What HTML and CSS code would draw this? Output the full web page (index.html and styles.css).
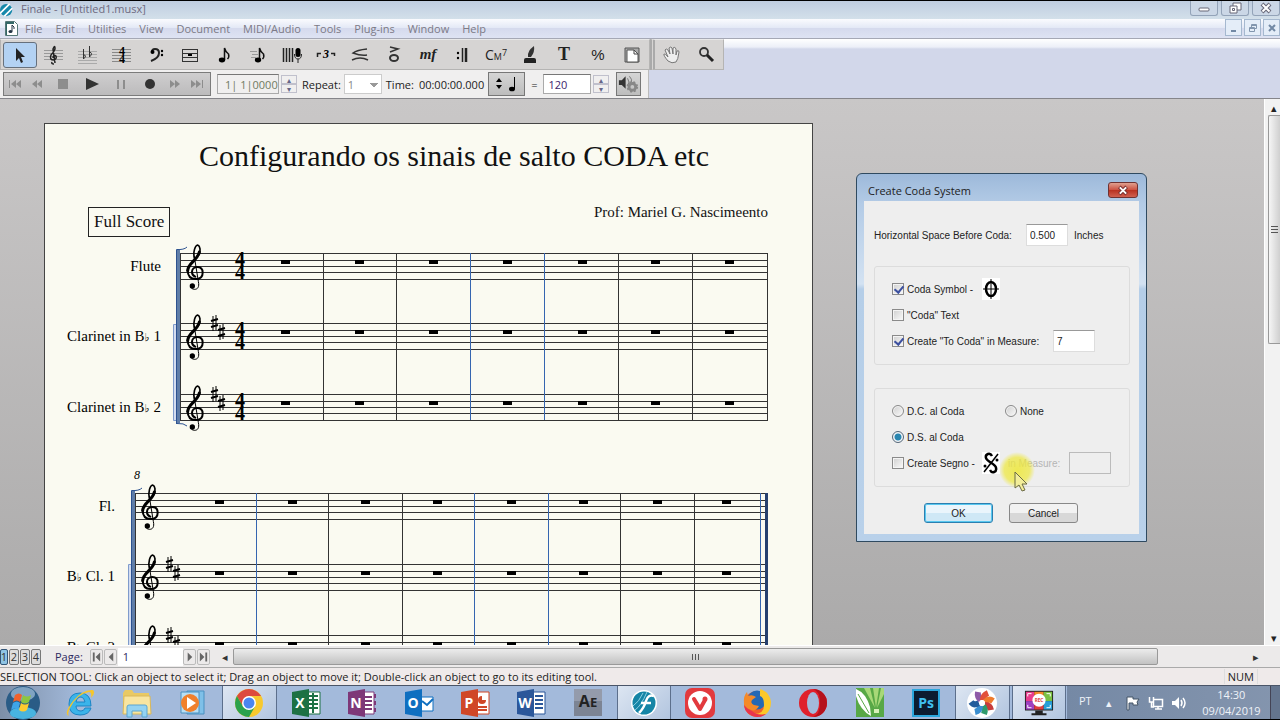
FILE: index.html
```html
<!DOCTYPE html>
<html lang="en">
<head>
  <meta charset="UTF-8">
  <meta name="viewport" content="width=device-width, initial-scale=1.0">
  <title>Finale - [Untitled1.musx]</title>
  <link rel="stylesheet" href="styles.css">
</head>
<body>
  <!-- Shared music symbols -->
  <svg class="defs" width="0" height="0" aria-hidden="true">
    <defs>
      <g id="clef" transform="scale(.3333)" fill="none" stroke="#000" stroke-linecap="round">
        <path stroke-width="5" d="M25 42C21 24 27 4 35 3C43 6 44 20 39 32"/>
        <path stroke-width="9" d="M40 24C36 48 6 56 5 80"/>
        <path stroke-width="6" d="M5 78C5 98 16 105 29 105C44 105 50 96 50 86C50 75 43 69 34 69C24 69 18 76 18 84C18 91 22 96 28 98"/>
        <path stroke-width="3" d="M25 38L37 112C41 130 34 136 26 136C18 136 12 130 14 124"/>
        <circle cx="19" cy="126" r="8" fill="#000" stroke="none"/>
      </g>
      <g id="sharp" stroke="#000" fill="none">
        <path d="M2 1V16M5 0V15"/>
        <path stroke-width="2" d="M0 6L7 4M0 12L7 10"/>
      </g>
      <g id="time" font-family="Liberation Serif, serif" font-weight="bold" font-size="20" text-anchor="middle">
        <text x="0" y="13">4</text>
        <text x="0" y="26">4</text>
      </g>
      <g id="rests1">
        <path d="M281 7h9v4h-9zM355 7h9v4h-9zM429 7h9v4h-9zM503 7h9v4h-9zM578 7h9v4h-9zM651 7h9v4h-9zM725 7h9v4h-9z"/>
      </g>
      <g id="rests2">
        <path d="M215 7h9v4h-9zM288 7h9v4h-9zM361 7h9v4h-9zM433 7h9v4h-9zM507 7h9v4h-9zM579 7h9v4h-9zM653 7h9v4h-9zM722 7h9v4h-9z"/>
      </g>
      <path id="staff1" d="M180 .5H768M180 7.5H768M180 13.5H768M180 19.5H768M180 26.5H768"/>
      <path id="staff2" d="M135 .5H768M135 7.5H768M135 13.5H768M135 19.5H768M135 26.5H768"/>
    </defs>
  </svg>

  <!-- Title bar -->
  <header class="titlebar">
    <svg class="app-icon" viewBox="0 0 16 16"><circle cx="7" cy="8" r="7" fill="#1688ab"/><path d="M0 12L11 1M5 15L14 6" stroke="#fff" stroke-width="2"/></svg>
    <span class="title">Finale - [Untitled1.musx]</span>
    <div class="window-buttons">
      <button aria-label="Minimize"><svg viewBox="0 0 14 12"><rect x="2" y="6" width="10" height="3" rx="1" fill="#fff" stroke="#667"/></svg></button>
      <button aria-label="Restore"><svg viewBox="0 0 14 12"><path d="M5 1h8v7h-8z" fill="#fff" stroke="#667"/><path d="M2 4h7v7h-7z" fill="#fff" stroke="#667"/><path d="M4.500 6.500h2v2h-2z" fill="none" stroke="#667"/></svg></button>
      <button aria-label="Close"><svg viewBox="0 0 14 12"><path d="M3 2l8 8M11 2l-8 8" stroke="#667" stroke-width="4"/><path d="M3.500 2.500l7 7M10.500 2.500l-7 7" stroke="#fff" stroke-width="2"/></svg></button>
    </div>
  </header>

  <!-- Menu bar -->
  <nav class="menubar">
    <svg class="doc-icon" viewBox="0 0 13 15"><path d="M.5.5h9l3 3v11h-12z" fill="#fff" stroke="#577"/><path d="M1 1h8v2H2v11H1z" fill="#366"/><path d="M7 4v6M7 4q3 2 2 4" fill="none" stroke="#234"/><ellipse cx="5.500" cy="10.500" rx="2" ry="1.500" fill="#234"/></svg>
    <a href="#">File</a>
    <a href="#">Edit</a>
    <a href="#">Utilities</a>
    <a href="#">View</a>
    <a href="#">Document</a>
    <a href="#">MIDI/Audio</a>
    <a href="#">Tools</a>
    <a href="#">Plug-ins</a>
    <a href="#">Window</a>
    <a href="#">Help</a>
    <div class="mdi-buttons">
      <button aria-label="Minimize document"><svg viewBox="0 0 10 10"><path d="M2 8h5" stroke="#7289a5" stroke-width="2"/></svg></button>
      <button aria-label="Restore document"><svg viewBox="0 0 10 10" fill="none" stroke="#8296ae"><path d="M3.500 4V1.500h5v4H7M1.500 4.500h5v4h-5zM1 5.500h5M3 2.500h5"/></svg></button>
      <button aria-label="Close document"><svg viewBox="0 0 10 10"><path d="M2 2l6 6M8 2L2 8" stroke="#7289a5" stroke-width="2"/></svg></button>
    </div>
  </nav>

  <!-- Tool palettes -->
  <div class="toolbars">
    <div class="tool-row">
      <div class="palette main-tools">
        <button class="selected" aria-label="Selection Tool"><svg viewBox="0 0 24 24"><path d="M8 5v13l3-3 2 5 2-1-2-5h4z" fill="#222"/></svg></button>
        <button aria-label="Staff Tool"><svg viewBox="0 0 24 24"><path d="M2 7.500h19M2 10.500h19M2 13.500h19M2 16.500h19" stroke="#999"/><path d="M12 21q-3 0-2-2m3 1L11 6q2-5 2 0-1 3-4 6-2 5 3 5 3-1 2-4-3-2-3 2" fill="none" stroke="#222" stroke-width="1.500"/></svg></button>
        <button aria-label="Key Signature Tool"><svg viewBox="0 0 24 24"><path d="M2 8.500h19M2 11.500h19M2 14.500h19M2 17.500h19M2 20.500h19" stroke="#aaa"/><path d="M7.500 6v10q4-4 0-4M13.500 3v11q4-4 0-5" fill="none" stroke="#333"/></svg></button>
        <button aria-label="Time Signature Tool"><svg viewBox="0 0 24 24"><path d="M2 6.500h19M2 9.500h19M2 12.500h19M2 15.500h19M2 18.500h19" stroke="#888"/><text x="12" y="12" class="meter">4</text><text x="12" y="20" class="meter">4</text></svg></button>
        <button aria-label="Clef Tool"><svg viewBox="0 0 24 24"><path d="M8 9q0-3 3-3 4 0 4 4 0 5-8 8" fill="none" stroke="#222" stroke-width="2"/><circle cx="8.500" cy="9" r="2"/><circle cx="18" cy="8" r="1.200"/><circle cx="18" cy="12" r="1.200"/></svg></button>
        <button aria-label="Measure Tool"><svg viewBox="0 0 24 24"><path d="M4.500 6v13M19.500 6v13M4 6.500h16M4 10.500h16M4 14.500h16M4 18.500h16" fill="none" stroke="#333"/><path d="M10 11h4v2h-4z"/></svg></button>
        <button aria-label="Simple Entry Tool"><svg viewBox="0 0 24 24"><path d="M12.500 17V5q1 4 4 6 1 3-1 5" fill="none" stroke="#111" stroke-width="1.500"/><ellipse cx="10" cy="17" rx="3.200" ry="2.400"/></svg></button>
        <button aria-label="Speedy Entry Tool"><svg viewBox="0 0 24 24"><path d="M13.500 17V5q1 4 4 6 1 3-1 5" fill="none" stroke="#111" stroke-width="1.500"/><ellipse cx="12" cy="17" rx="3.200" ry="2.400"/><path d="M4 8.500h7M6 11.500h6M5 14.500h5" stroke="#999"/></svg></button>
        <button aria-label="HyperScribe Tool"><svg viewBox="0 0 24 24"><path d="M3.500 5v14M6.500 5v14M9.500 5v14M12.500 5v14" stroke="#222" stroke-width="1.500"/><rect x="15.500" y="5" width="5" height="9" rx="2.500"/><path d="M14.500 11q0 5 3.500 5t3.500-5M18 16v4" fill="none" stroke="#222"/></svg></button>
        <button aria-label="Tuplet Tool"><svg viewBox="0 0 24 24"><path d="M3.500 14v-3.500H7M17 10.500h3.500V13" fill="none" stroke="#222" stroke-width="1.500"/><text x="12" y="15" class="tuplet">3</text></svg></button>
        <button aria-label="Smart Shape Tool"><svg viewBox="0 0 24 24" fill="none" stroke="#333" stroke-width="1.500"><path d="M19 6Q9 7 5 10q8 3 14 2"/><path d="M4 17q8-4 16 0"/></svg></button>
        <button aria-label="Articulation Tool"><svg viewBox="0 0 24 24"><path d="M8 4l8 2-8 3" fill="none" stroke="#333" stroke-width="1.500"/><ellipse cx="12" cy="15" rx="4" ry="3" fill="none" stroke="#333" stroke-width="2"/></svg></button>
        <button class="dynamic" aria-label="Expression Tool">mf</button>
        <button aria-label="Repeat Tool"><svg viewBox="0 0 24 24"><path d="M12.500 5v14" stroke="#222" stroke-width="1.500"/><path d="M16 5v14" stroke="#222" stroke-width="2.500"/><circle cx="8" cy="10" r="1.200"/><circle cx="8" cy="15" r="1.200"/></svg></button>
        <button class="chord" aria-label="Chord Tool">C<small>M</small><sup>7</sup></button>
        <button aria-label="Lyrics Tool"><svg viewBox="0 0 24 24"><path d="M6 20v-3q0-2 2-2h8q2 0 2 2v3z" fill="#222"/><path d="M10 14Q9 8 16 3q1 6-3 11z" fill="#333"/></svg></button>
        <button class="text-tool" aria-label="Text Tool">T</button>
        <button class="percent" aria-label="Resize Tool">%</button>
        <button aria-label="Page Layout Tool"><svg viewBox="0 0 24 24"><path d="M5 5h14v14H5z" fill="#aaa" stroke="#555"/><path d="M7 7h7l4 4v8H7z" fill="#fff" stroke="#555"/><path d="M14 7v4h4" fill="none" stroke="#444"/></svg></button>
      </div>
      <div class="palette nav-tools">
        <button aria-label="Hand Grabber Tool"><svg viewBox="0 0 24 24"><path d="M8 18q-5-6-4-7t4 3L5 7q1-2 3 0l2 4-1-6q2-2 3 0l1 6V5q2-2 3 1v6l1-4q2-1 2 1-1 8-3 10-4 2-8-1z" fill="#eee" stroke="#777"/></svg></button>
        <button aria-label="Zoom Tool"><svg viewBox="0 0 24 24"><circle cx="10" cy="9" r="4" fill="none" stroke="#333" stroke-width="1.800"/><path d="M13 12l6 6" stroke="#222" stroke-width="3"/></svg></button>
      </div>
    </div>

    <div class="playback">
      <div class="transport">
        <button aria-label="Rewind to start"><svg viewBox="0 0 16 16"><path d="M2 4h1v8H2zM9 4v8L4 8zM14 4v8L9 8z"/></svg></button>
        <button aria-label="Rewind"><svg viewBox="0 0 16 16"><path d="M8 4v8L3 8zM13 4v8L8 8z"/></svg></button>
        <button class="wide" aria-label="Stop"><svg viewBox="0 0 16 16"><path d="M3 3h10v10H3z"/></svg></button>
        <button class="wide dark" aria-label="Play"><svg viewBox="0 0 16 16"><path d="M2 2v12l13-6z"/></svg></button>
        <button class="wide" aria-label="Pause"><svg viewBox="0 0 16 16"><path d="M4 4h2v9H4zM10 4h2v9h-2z"/></svg></button>
        <button class="wide dark" aria-label="Record"><svg viewBox="0 0 16 16"><circle cx="8" cy="8" r="5"/></svg></button>
        <button aria-label="Fast forward"><svg viewBox="0 0 16 16"><path d="M3 4v8l5-4zM8 4v8l5-4z"/></svg></button>
        <button aria-label="Forward to end"><svg viewBox="0 0 16 16"><path d="M2 4v8l5-4zM7 4v8l5-4zM13 4h1v8h-1z"/></svg></button>
      </div>
      <div class="stepper">
        <input class="counter" type="text" value="1| 1|0000" aria-label="Counter">
        <span class="spin"><button aria-label="Counter up">▴</button><button aria-label="Counter down">▾</button></span>
      </div>
      <label for="repeat">Repeat:</label>
      <select id="repeat" class="repeat"><option>1</option></select>
      <span>Time:</span>
      <span class="time">00:00:00.000</span>
      <button class="note-button" aria-label="Beat unit"><svg viewBox="0 0 30 20"><path d="M4 8l3-4 3 4zM4 11l3 4 3-4zM22 3h1v12h-1z"/><ellipse cx="20" cy="15" rx="3" ry="2.300"/></svg></button>
      <label for="tempo" class="equals">=</label>
      <div class="stepper">
        <input id="tempo" class="tempo" type="text" value="120">
        <span class="spin"><button aria-label="Tempo up">▴</button><button aria-label="Tempo down">▾</button></span>
      </div>
      <button class="speaker" aria-label="Playback settings"><svg viewBox="0 0 24 22"><path d="M2 7h3l4-4v13l-4-4H2z" fill="#333"/><path d="M11 5q3 4 0 8M13 3q3 3 2 6" fill="none" stroke="#777"/><circle cx="16" cy="14" r="3.500" fill="none" stroke="#888" stroke-width="3"/><circle cx="16" cy="14" r="5" fill="none" stroke="#888" stroke-width="2" stroke-dasharray="2 2"/></svg></button>
    </div>
  </div>

  <!-- Score -->
  <main class="workspace">
    <div class="canvas">
      <article class="sheet">
        <h1>Configurando os sinais de salto CODA etc</h1>
        <div class="credits">
          <span class="part-name">Full Score</span>
          <span class="composer">Prof: Mariel G. Nascimeento</span>
        </div>
        <svg class="system" viewBox="45 237 767 200">
          <g class="names" text-anchor="end">
            <text x="161" y="271">Flute</text>
            <text x="161" y="341">Clarinet in B<tspan class="flat">♭</tspan> 1</text>
            <text x="161" y="412">Clarinet in B<tspan class="flat">♭</tspan> 2</text>
          </g>
          <path d="M173.500 324.500h4v96h-4z" fill="#d3dcf0" stroke="#7f9bcc"/>
          <path d="M177 250h3v173h-3z" fill="#5f7da8"/>
          <path d="M176.500 424V249.500Q184 250 187 247M177 423.500Q184 423 187 426" fill="none" stroke="#2c5290"/>
          <g class="lines">
            <use href="#staff1" y="253"/><use href="#staff1" y="323"/><use href="#staff1" y="394"/>
            <path d="M180.500 253V420M323.500 253V420M396.500 253V420M618.500 253V420M692.500 253V420M767.500 253V420"/>
            <path class="blue" d="M470.500 253V420M544.500 253V420"/>
          </g>
          <use href="#rests1" y="253"/><use href="#rests1" y="323"/><use href="#rests1" y="394"/>
          <use href="#clef" transform="translate(186 244)"/><use href="#clef" transform="translate(186 314)"/><use href="#clef" transform="translate(186 385)"/>
          <use href="#time" x="240" y="253"/><use href="#time" x="240" y="323"/><use href="#time" x="240" y="394"/>
          <use href="#sharp" x="211" y="315"/><use href="#sharp" x="218" y="324"/>
          <use href="#sharp" x="211" y="386"/><use href="#sharp" x="218" y="395"/>
        </svg>
        <svg class="system" viewBox="45 437 767 240">
          <g class="names" text-anchor="end">
            <text x="140" y="479" class="measure-number">8</text>
            <text x="115" y="511">Fl.</text>
            <text x="115" y="581">B<tspan class="flat">♭</tspan> Cl. 1</text>
            <text x="115" y="652">B<tspan class="flat">♭</tspan> Cl. 2</text>
          </g>
          <path d="M128.500 564.500h4v96h-4z" fill="#d3dcf0" stroke="#7f9bcc"/>
          <path d="M132 490h3v173h-3z" fill="#5f7da8"/>
          <path d="M131.500 664V490.500Q139 491 142 488" fill="none" stroke="#2c5290"/>
          <g class="lines">
            <use href="#staff2" y="493"/><use href="#staff2" y="564"/><use href="#staff2" y="635"/>
            <path d="M135.500 493V662M328.500 493V662M402.500 493V662M620.500 493V662M694.500 493V662"/>
            <path class="blue" d="M256.500 493V662M474.500 493V662M548.500 493V662M760.500 493V662"/>
          </g>
          <path d="M765 493h3v169h-3z" fill="#26406f"/>
          <use href="#rests2" y="493"/><use href="#rests2" y="564"/><use href="#rests2" y="635"/>
          <use href="#clef" transform="translate(141 484)"/><use href="#clef" transform="translate(141 554)"/><use href="#clef" transform="translate(141 625)"/>
          <use href="#sharp" x="166" y="556"/><use href="#sharp" x="173" y="565"/>
          <use href="#sharp" x="166" y="627"/><use href="#sharp" x="173" y="636"/>
        </svg>
      </article>
    </div>
    <div class="vscroll">
      <button aria-label="Scroll up">▴</button>
      <div class="vthumb"><i></i><i></i><i></i></div>
      <button class="last" aria-label="Scroll down">▾</button>
    </div>
  </main>

  <!-- Page navigation -->
  <div class="pagebar">
    <div class="layers">
      <button class="on">1</button><button>2</button><button>3</button><button>4</button>
    </div>
    <label for="page">Page:</label>
    <button class="nav" aria-label="First page"><svg viewBox="0 0 12 14"><path d="M2 2h2v10H2zM10 2v10L5 7z"/></svg></button>
    <button class="nav" aria-label="Previous page"><svg viewBox="0 0 12 14"><path d="M9 2v10L4 7z"/></svg></button>
    <input id="page" type="text" value="1">
    <button class="nav" aria-label="Next page"><svg viewBox="0 0 12 14"><path d="M4 2v10l5-5z"/></svg></button>
    <button class="nav" aria-label="Last page"><svg viewBox="0 0 12 14"><path d="M2 2v10l5-5zM8 2h2v10H8z"/></svg></button>
    <div class="hscroll">
      <button aria-label="Scroll left">◂</button>
      <div class="hthumb"><i></i><i></i><i></i></div>
      <button class="last" aria-label="Scroll right">▸</button>
    </div>
  </div>

  <footer class="statusbar">
    <span>SELECTION TOOL: Click an object to select it; Drag an object to move it; Double-click an object to go to its editing tool.</span>
    <span class="num">NUM</span>
  </footer>

  <!-- Windows taskbar -->
  <div class="taskbar">
    <button class="start" aria-label="Start"><svg viewBox="0 0 36 34"><circle cx="18" cy="17" r="17" fill="#2a5c86"/><ellipse cx="18" cy="27" rx="13" ry="6" fill="#48b4e0"/><ellipse cx="18" cy="8" rx="12" ry="7" fill="#7fa3c2"/><path d="M10 9q4-3 7 0l-2 7q-3-3-7 0z" fill="#f0622c"/><path d="M18 9q4 3 8 0l-2 7q-4 3-8 0z" fill="#8dc63f"/><path d="M8 17q4-3 7 0l-2 7q-3-3-7 0z" fill="#3fa5e8"/><path d="M16 17q4 3 8 0l-2 7q-4 3-8 0z" fill="#fecb2f"/></svg></button>
    <div class="apps">
      <button aria-label="Internet Explorer"><svg viewBox="0 0 30 30"><path d="M26 20q-2 7-11 7Q4 27 4 16T15 5q11 0 11 13H11q0 5 5 5 3 0 4-3zM11 14h9q-1-5-4-5-4 0-5 5z" fill="#3bb4ea" stroke="#1c84c4"/><path d="M4 28Q-2 26 8 13 18 1 28 2q3 3-2 8 1-6-2-6Q12 6 5 20q-3 6-1 8z" fill="#f6c62c"/></svg></button>
      <button aria-label="Explorer"><svg viewBox="0 0 30 30"><path d="M1 5l2-3h7l2 3h15v20H1z" fill="#e9c964"/><path d="M2 8h26l1 18H1z" fill="#f8e5a0" stroke="#d9b85a"/><path d="M5 29V19q0-2 2-2h16q2 0 2 2v10h-5v-6H10v6z" fill="#93d3f2" stroke="#5aa5d0"/></svg></button>
      <button aria-label="Media Player"><svg viewBox="0 0 30 30"><path d="M9 3h17v23H9z" fill="#7fc0e8" stroke="#4a90c0"/><path d="M3 4h18v21H3z" fill="#b7dff5" stroke="#4a90c0"/><circle cx="12" cy="15" r="9" fill="#f0802c"/><path d="M9 9v12l9-6z" fill="#fff"/></svg></button>
      <button class="active" aria-label="Chrome"><svg viewBox="0 0 30 30"><circle cx="15" cy="15" r="14" fill="#f7c92e"/><path d="M2.900 8A14 14 0 0 1 27.100 8L15 8Q10 8 9 18.500z" fill="#dd4b3e"/><path d="M2.900 8A14 14 0 0 0 15 29L21 18.500 9 18.500z" fill="#2ba24c"/><circle cx="15" cy="15" r="7" fill="#fff"/><circle cx="15" cy="15" r="5.500" fill="#4a86f0"/></svg></button>
      <button aria-label="Excel"><svg viewBox="0 0 30 30"><path d="M14 4h15v22H14z" fill="#fff" stroke="#1d7144"/><path d="M17 8h10M17 12h10M17 16h10M17 20h10M22 5v20" stroke="#1d7144" stroke-width="2"/><path d="M1 4l17-3v28L1 26z" fill="#1d7144"/><text x="9" y="20">X</text></svg></button>
      <button aria-label="OneNote"><svg viewBox="0 0 30 30"><path d="M14 4h13v22H14z" fill="#fff" stroke="#7e3878"/><path d="M18 9h7M18 13h7M18 17h7M18 21h7M28 6v4M28 13v4M28 20v4" stroke="#7e3878" stroke-width="2"/><path d="M1 4l17-3v28L1 26z" fill="#7e3878"/><text x="9" y="20">N</text></svg></button>
      <button aria-label="Outlook"><svg viewBox="0 0 30 30"><path d="M15 9h14v14H15z" fill="#fff" stroke="#0f6fc0"/><path d="M18 13l5 4 6-6" fill="none" stroke="#0f6fc0" stroke-width="2"/><path d="M1 4l17-3v28L1 26z" fill="#0f6fc0"/><text x="9" y="20">O</text></svg></button>
      <button aria-label="PowerPoint"><svg viewBox="0 0 30 30"><path d="M14 4h15v22H14z" fill="#fff" stroke="#d04727"/><circle cx="22" cy="12" r="4" fill="#d04727"/><path d="M22 12V7h5v5z" fill="#fff"/><path d="M18 19h9M18 22h9" stroke="#d04727" stroke-width="2"/><path d="M1 4l17-3v28L1 26z" fill="#d04727"/><text x="9" y="20">P</text></svg></button>
      <button aria-label="Word"><svg viewBox="0 0 30 30"><path d="M14 4h15v22H14z" fill="#fff" stroke="#2b579a"/><path d="M19 8h8M19 12h8M19 16h8M19 20h8" stroke="#2b579a" stroke-width="2"/><path d="M1 4l17-3v28L1 26z" fill="#2b579a"/><text x="9" y="20">W</text></svg></button>
      <button aria-label="After Effects"><svg viewBox="0 0 30 30"><path d="M1 1h28v27H1z" fill="#7c8494"/><path d="M1 1h28v12H1z" fill="#949bab"/><text x="15" y="19" class="ae">A<tspan font-size="13">E</tspan></text></svg></button>
      <button class="active" aria-label="Finale"><svg viewBox="0 0 30 30"><circle cx="15" cy="15" r="13" fill="#fff"/><circle cx="15" cy="15" r="11.500" fill="#1585a6"/><path d="M4 18Q10 14 14 5M6 22Q12 18 18 4" fill="none" stroke="#8ed0e2"/><path d="M25 8Q19 6 17 13t-7 12M12 15h10" fill="none" stroke="#fff" stroke-width="2.500"/></svg></button>
      <button aria-label="Vivaldi"><svg viewBox="0 0 30 30"><rect x="0" y="0" width="30" height="30" rx="7" fill="#e23a3e"/><circle cx="15" cy="15" r="12" fill="#fff"/><path d="M9 11l6 10 5-9" fill="none" stroke="#e23a3e" stroke-width="4" stroke-linecap="round" stroke-linejoin="round"/><circle cx="20" cy="11" r="2.500" fill="#e23a3e"/></svg></button>
      <button aria-label="Firefox"><svg viewBox="0 0 30 30"><circle cx="15" cy="16" r="13" fill="#f0602c"/><circle cx="15" cy="12" r="9.500" fill="#2468b5"/><path d="M18 1q10 3 11 13 0 8-5 12-8 5-14 0 12 1 12-9 0-8-4-9z" fill="#fbc82a"/><path d="M2 16Q1 8 5 4l1 4q4-2 8 1l-4 3q-2 3 2 5l5 1q-4 7-10 3-5-1-5-5z" fill="#f58a28"/><path d="M2 17q1 10 13 12 6 0 9-3-9 2-14-3-5-2-8-6z" fill="#e8344c"/></svg></button>
      <button aria-label="Opera"><svg viewBox="0 0 30 30"><ellipse cx="15" cy="15" rx="14" ry="14" fill="#e0202c"/><path d="M15 1a14 14 0 0 1 0 28q7-2 7-14T15 1z" fill="#b5121c"/><ellipse cx="15" cy="15" rx="6" ry="11" fill="#a3badb"/></svg></button>
      <button aria-label="CorelDRAW"><svg viewBox="0 0 30 30"><path d="M1 0h28v29H1z" fill="#58a846"/><path d="M20 20L9 0h6zM21 20L18 0h6zM22 20L26 0h3v6z" fill="#a8d878"/><path d="M1 1q10 4 14 18l1 9Q5 22 1 8z" fill="#fff"/><path d="M3 6l11 19" stroke="#58a846"/><path d="M19 21h5v4h-5z" fill="#d8f0b8"/></svg></button>
      <button aria-label="Photoshop"><svg viewBox="0 0 30 30"><path d="M2 2h26v26H2z" fill="#0c1c30" stroke="#2ba6dc" stroke-width="2"/><text x="15" y="20" class="ps">Ps</text></svg></button>
      <button class="active" aria-label="Movavi"><svg viewBox="0 0 30 30"><circle cx="15" cy="15" r="15" fill="#fff"/><g fill="none" stroke-width="6"><path d="M14 12q-4-3-3-8" stroke="#8e5aa8"/><path d="M16 12q0-5 5-7" stroke="#e2503a"/><path d="M18 14q4-4 8-1" stroke="#ef7b2d"/><path d="M18 17q5 0 6 5" stroke="#c83c3c"/><path d="M16 18q3 3 1 8" stroke="#2f9a6c"/><path d="M13 18q0 5-5 6" stroke="#3a8ed0"/><path d="M12 15q-5 3-8-1" stroke="#235c9c"/></g><circle cx="15" cy="15" r="3" fill="#fff"/></svg></button>
      <button class="active" aria-label="Screen Recorder"><svg viewBox="0 0 32 30"><path d="M1 2h30v21H1z" fill="#222"/><path d="M2 3h9v10H2z" fill="#e83c8c"/><path d="M11 3h10v10H11z" fill="#f58a28"/><path d="M21 3h9v10h-9z" fill="#7ac142"/><path d="M2 13h9v9H2z" fill="#a040c0"/><path d="M11 13h10v9H11z" fill="#e03c3c"/><path d="M21 13h9v9h-9z" fill="#28a0d8"/><path d="M4 8V5h4M24 5h4v3M4 17v3h4M24 20h4v-3" fill="none" stroke="#fff"/><circle cx="16" cy="12" r="7" fill="#fff"/><text x="16" y="14" class="rec">REC</text><path d="M12 23h8v3h4v2H8v-2h4z" fill="#222"/></svg></button>
    </div>
    <div class="tray">
      <span class="lang">PT</span>
      <span class="up">▴</span>
      <svg viewBox="0 0 18 16"><path d="M3 2h6v2h6l-2 3 1 3H9V8H5v7H3z" fill="#fff" stroke="#456"/></svg>
      <svg viewBox="0 0 18 16"><path d="M6.500 4.500h9v7h-9zM8 14h7M11 12v2M2.500 2v5h4V2M4.500 7v5H7" fill="none" stroke="#fff" stroke-width="1.500"/></svg>
      <svg viewBox="0 0 18 16"><path d="M2 6h3l4-4v12l-4-4H2z" fill="#fff"/><path d="M11 5q2 3 0 6M13 3q4 5 0 10" fill="none" stroke="#fff" stroke-width="1.500"/></svg>
      <time class="clock">14:30<br>09/04/2019</time>
      <button class="show-desktop" aria-label="Show desktop"></button>
    </div>
  </div>

  <!-- Create Coda System -->
  <form class="dialog" role="dialog" aria-labelledby="dialogTitle">
    <div class="dialog-title">
      <span id="dialogTitle">Create Coda System</span>
      <button type="button" class="close" aria-label="Close"><svg viewBox="0 0 14 12"><path d="M3 2l8 8M11 2l-8 8" stroke="#7a3030" stroke-width="4"/><path d="M3.500 2.500l7 7M10.500 2.500l-7 7" stroke="#fff" stroke-width="2"/></svg></button>
    </div>
    <div class="dialog-body">
      <div class="space-row">
        <label for="space">Horizontal Space Before Coda:</label>
        <input id="space" type="text" value="0.500">
        <span>Inches</span>
      </div>
      <fieldset>
        <div class="row">
          <input type="checkbox" id="codaSymbol" checked><label for="codaSymbol" class="symbol-label">Coda Symbol -</label>
          <svg class="symbol" viewBox="0 0 18 22"><path d="M0 0h18v22H0z" fill="#fff"/><ellipse cx="9" cy="11" rx="5" ry="7" fill="none" stroke="#000" stroke-width="2.500"/><path d="M9 1v20M1 11h16" stroke="#000"/></svg>
        </div>
        <div class="row">
          <input type="checkbox" id="codaText"><label for="codaText">"Coda" Text</label>
        </div>
        <div class="row">
          <input type="checkbox" id="toCoda" checked><label for="toCoda">Create "To Coda" in Measure:</label>
          <input type="text" class="measure" value="7" aria-label="To Coda measure">
        </div>
      </fieldset>
      <fieldset class="jumps">
        <div class="row">
          <input type="radio" name="jump" id="dc"><label for="dc" class="first">D.C. al Coda</label>
          <input type="radio" name="jump" id="none"><label for="none">None</label>
        </div>
        <div class="row">
          <input type="radio" name="jump" id="ds" checked><label for="ds">D.S. al Coda</label>
        </div>
        <div class="row">
          <input type="checkbox" id="segno"><label for="segno" class="symbol-label">Create Segno -</label>
          <svg class="symbol" viewBox="0 0 18 22"><path d="M0 0h18v22H0z" fill="#fff"/><path d="M10 4C8 0 3 2 4 6C5 10 14 12 14 16C15 20 10 22 8 18" fill="none" stroke="#000" stroke-width="2.500"/><path d="M16 2L2 20" stroke="#000" stroke-width="1.500"/><circle cx="3" cy="14" r="1.500"/><circle cx="15" cy="8" r="1.500"/></svg>
          <label for="segnoMeasure" class="off">in Measure:</label>
          <input type="text" id="segnoMeasure" class="measure" disabled>
        </div>
      </fieldset>
      <div class="actions">
        <button type="submit" class="ok">OK</button>
        <button type="button">Cancel</button>
      </div>
    </div>
  </form>

  <svg class="pointer" viewBox="0 0 36 44"><defs><radialGradient id="glow"><stop offset="0" stop-color="#eee83a" stop-opacity=".85"/><stop offset=".7" stop-color="#eee83a" stop-opacity=".7"/><stop offset="1" stop-color="#eee83a" stop-opacity="0"/></radialGradient></defs><circle cx="18" cy="18" r="18" fill="url(#glow)"/><path d="M16 20v16l4-3 3 6 3-1-3-6h5z" fill="#f3ee9a" stroke="#6b6a45"/></svg>
</body>
</html>
```
FILE: styles.css
```css
/* Global Styles */
* {
  box-sizing: border-box;
}
body {
  margin: 0;
  height: 100vh;
  display: flex;
  flex-direction: column;
  overflow: hidden;
  position: relative;
  font-family: 'Open Sans', 'Noto Sans', sans-serif;
  font-size: 11px;
  color: #222;
  background: #d2d7ea;
}
button {
  padding: 0;
  border: 0;
  background: none;
  font: inherit;
  color: inherit;
  display: flex;
  align-items: center;
  justify-content: center;
}
input, select {
  font: inherit;
  color: inherit;
}
.defs {
  position: absolute;
}

/* Title bar */
.titlebar {
  height: 19px;
  flex: none;
  display: flex;
  align-items: center;
  border-top: 1px solid #000;
  background: linear-gradient(#bfcde0, #d3e0ea);
  color: #6e6a80;
}
.app-icon {
  width: 14px;
  height: 14px;
}
.title {
  margin-left: 7px;
  padding-bottom: 3px;
  line-height: 14px;
}
.window-buttons, .mdi-buttons {
  display: flex;
  margin-left: auto;
  align-self: flex-start;
}
.window-buttons {
  gap: 3px;
}
.window-buttons button {
  width: 28px;
  height: 15px;
  border: 1px solid #93a3b8;
  border-top: 0;
  border-radius: 0 0 3px 3px;
  background: #cbd7e6;
}
.window-buttons svg {
  width: 14px;
  height: 12px;
}

/* Menu bar */
.menubar {
  height: 20px;
  flex: none;
  display: flex;
  align-items: center;
  gap: 13px;
  padding-left: 5px;
  border-bottom: 1px solid #a5a8b5;
  background: linear-gradient(#fafbfe, #e4e9f6 45%, #d5daed 50%, #dee3f3);
}
.menubar a {
  color: #7c7a86;
  text-decoration: none;
}
.doc-icon {
  width: 13px;
  height: 15px;
  margin-right: -6px;
}
.mdi-buttons {
  gap: 2px;
}
.mdi-buttons button {
  width: 17px;
  height: 17px;
  border: 1px solid #a5b8cf;
  background: #e4edf8;
}
.mdi-buttons svg {
  width: 10px;
  height: 10px;
}

/* Tool palettes */
.toolbars {
  height: 60px;
  flex: none;
  background: linear-gradient(#fff, #eceff8 8px, #d2d7ea 10px);
  border-bottom: 1px solid #85858a;
}
.tool-row {
  display: flex;
  height: 31px;
}
.palette {
  display: flex;
  align-items: center;
  background: #d6d4d3;
  border: 1px solid #b5b4b3;
  border-top-color: #e8e8e8;
}
.main-tools {
  padding-left: 2px;
}
.nav-tools {
  border-left: 5px double #aaa;
}
.palette button {
  width: 34px;
  height: 26px;
}
.palette svg {
  width: 24px;
  height: 24px;
}
.palette .selected {
  border: 1px solid #66707c;
  border-radius: 3px;
  background: #b3d2f3;
}
.meter, .tuplet {
  font-family: 'Liberation Serif', serif;
  font-weight: bold;
  font-size: 12px;
  text-anchor: middle;
}
.tuplet {
  font-style: italic;
}
.palette .dynamic {
  font: italic bold 15px 'Liberation Serif', serif;
}
.palette .chord {
  font: 14px 'Open Sans', sans-serif;
}
.chord small {
  font-size: 9px;
  padding-top: 3px;
}
.chord sup {
  font-size: 9px;
  padding-bottom: 4px;
}
.palette .text-tool {
  font: bold 18px 'Liberation Serif', serif;
}
.palette .percent {
  font: 15px 'Liberation Sans', sans-serif;
}

/* Playback controls */
.playback {
  display: flex;
  align-items: center;
  height: 28px;
  width: 649px;
  padding-left: 3px;
  background: #f0efef;
  border-right: 1px solid #bbb;
}
.transport {
  display: flex;
  align-items: center;
  width: 208px;
  height: 24px;
  border: 1px solid #7b7b7b;
  background: linear-gradient(#cfcecf, #bcbbbc);
  fill: #8d8d8d;
}
.transport button {
  width: 22px;
}
.transport .wide {
  width: 29px;
}
.transport .dark {
  fill: #333;
}
.transport svg {
  width: 16px;
  height: 16px;
}
.stepper {
  display: flex;
  align-items: center;
}
.transport + .stepper {
  margin: 0 5px 0 6px;
}
.stepper input {
  height: 20px;
  padding: 0 4px;
  border: 1px solid #aaa;
  border-top-color: #777;
  background: #fff;
}
.stepper .counter {
  width: 62px;
  padding: 0 0 0 7px;
  background: #f0efef;
  color: #6f7b62;
}
.stepper .tempo {
  width: 48px;
  color: #3c1c6c;
}
.spin {
  display: flex;
  flex-direction: column;
  width: 16px;
  margin-left: 2px;
}
.spin button {
  height: 9px;
  border: 1px solid #c0c0cc;
  font-size: 8px;
  line-height: 7px;
  color: #668;
}
.repeat {
  appearance: none;
  width: 38px;
  height: 20px;
  margin: 0 4px 0 3px;
  padding: 0 3px;
  border: 1px solid #ccc;
  background:
    linear-gradient(45deg, transparent 50%, #999 50%) 25px 8px / 4px 4px no-repeat,
    linear-gradient(-45deg, transparent 50%, #999 50%) 29px 8px / 4px 4px no-repeat,
    #fff;
  color: #888;
}
.time {
  margin: 0 4px 0 5px;
}
.note-button, .speaker {
  height: 24px;
  border: 1px solid #777;
  background: linear-gradient(#d5d5d5, #bdbdbd);
}
.note-button {
  width: 37px;
}
.note-button svg {
  width: 30px;
  height: 20px;
}
.equals {
  margin: 0 6px;
}
.speaker {
  width: 25px;
  margin-left: 7px;
}
.speaker svg {
  width: 24px;
  height: 22px;
}

/* Score */
.workspace {
  flex: 1;
  min-height: 0;
  display: flex;
  background: #f2f2f2;
}
.canvas {
  flex: 1;
  overflow: hidden;
  padding: 24px 0 0 44px;
  background: linear-gradient(#c9c7c7, #abaaaa);
}
.sheet {
  width: 769px;
  padding-top: 12px;
  border: 1px solid #444;
  background: #fafaf1;
  font-family: 'Liberation Serif', serif;
  color: #111;
}
.sheet h1 {
  margin: 0 44px 31px 95px;
  font-size: 30px;
  font-weight: normal;
  line-height: 40px;
  text-align: center;
  white-space: nowrap;
}
.credits {
  display: flex;
  justify-content: space-between;
  margin: 0 44px 0 43px;
}
.part-name {
  height: 30px;
  padding: 0 5px;
  border: 1px solid #222;
  font-size: 17px;
  line-height: 27px;
}
.composer {
  font-size: 15px;
  line-height: 11px;
}
.system {
  display: block;
  width: 100%;
}
.names {
  font-size: 15px;
}
.flat {
  font-family: 'DejaVu Sans', sans-serif;
  font-size: 11px;
}
.measure-number {
  font-size: 12px;
  font-style: italic;
}
.lines {
  fill: none;
  stroke: #333;
}
.lines .blue {
  stroke: #3565b0;
}

/* Scrollbars */
.vscroll {
  width: 16px;
  padding-left: 3px;
  display: flex;
  flex-direction: column;
  border-left: 1px solid #fff;
}
.vscroll button {
  height: 16px;
}
.vthumb {
  height: 229px;
  border: 1px solid #999;
  border-right: 0;
  border-radius: 2px 0 0 2px;
  background: linear-gradient(90deg, #f5f5f5, #cfcfcf);
  display: flex;
  flex-direction: column;
  align-items: center;
  justify-content: center;
  gap: 2px;
}
.vthumb i {
  width: 7px;
  height: 1px;
  background: #555;
}
.last {
  margin-top: auto;
}

/* Page navigation */
.pagebar {
  height: 22px;
  flex: none;
  display: flex;
  align-items: center;
  background: #eceaea;
  border-top: 1px solid #fff;
  color: #2c2860;
}
.layers {
  display: flex;
  gap: 1px;
}
.layers button {
  width: 10px;
  height: 16px;
  border: 1px solid #777;
  border-radius: 2px;
  background: #ddd;
  color: #333;
}
.layers .on {
  width: 8px;
  background: #8fc4e4;
  border-color: #357;
}
.pagebar label {
  margin: 0 7px 0 14px;
}
.pagebar .nav {
  width: 13px;
  height: 16px;
  margin-right: 1px;
  border: 1px solid #bbb;
  border-radius: 2px;
  fill: #666;
}
.nav svg {
  width: 12px;
  height: 14px;
}
.pagebar input {
  width: 65px;
  height: 18px;
  padding: 0 5px;
  border: 0;
  background: #fff;
}
.hscroll {
  flex: 1;
  display: flex;
  align-items: center;
  margin-left: 6px;
  padding-right: 16px;
  color: #333;
}
.hscroll button {
  width: 16px;
}
.hthumb {
  flex: 0 1 925px;
  height: 17px;
  border: 1px solid #999;
  border-radius: 2px;
  background: linear-gradient(#ececec, #c2c2c2);
  display: flex;
  align-items: center;
  justify-content: center;
  gap: 2px;
}
.hthumb i {
  width: 1px;
  height: 6px;
  background: #555;
}
.hscroll .last {
  margin: 0 0 0 auto;
}

/* Status bar */
.statusbar {
  height: 18px;
  flex: none;
  display: flex;
  align-items: center;
  justify-content: space-between;
  padding-right: 22px;
  border-top: 1px solid #aaa;
  background: #efeaea;
  white-space: nowrap;
}
.num {
  padding: 0 3px;
  border: 1px solid #ddd;
  border-width: 0 1px;
}

/* Taskbar */
.taskbar {
  height: 35px;
  flex: none;
  display: flex;
  border-top: 1px solid #4a5568;
  border-bottom: 1px solid #000;
  background: linear-gradient(90deg, #7d8fa8, #a3badb 80px);
}
.start {
  width: 52px;
  padding-right: 6px;
}
.start svg {
  width: 36px;
  height: 34px;
}
.apps {
  flex: 1;
  display: grid;
  grid-template-columns: repeat(18, 1fr);
}
.apps button {
  margin: 0 1px;
}
.apps svg {
  width: 30px;
  height: 30px;
}
.apps .active {
  border: 1px solid #5c6f8c;
  border-width: 0 1px;
  background: linear-gradient(135deg, #dde6f2, #b2c5df);
}
.apps text {
  font: bold 14px 'Open Sans', sans-serif;
  text-anchor: middle;
  fill: #fff;
}
.apps .ae {
  font-size: 16px;
  fill: #222;
}
.apps .ps {
  font-size: 14px;
  fill: #3fc0f0;
}
.apps .rec {
  font-size: 5px;
  fill: #e03c3c;
}
.tray {
  width: 213px;
  display: flex;
  align-items: center;
  background: linear-gradient(90deg, #7589a5, #8495ae);
  color: #eef2f8;
}
.lang {
  margin: 0 14px 4px 12px;
}
.up {
  width: 12px;
  margin-right: 6px;
}
.tray svg {
  width: 18px;
  height: 16px;
  margin-right: 5px;
}
.clock {
  flex: 1;
  font-size: 11px;
  line-height: 16px;
  text-align: center;
}
.show-desktop {
  align-self: stretch;
  width: 10px;
  border-left: 1px solid #445;
  background: #64758e;
}

/* Dialog */
.dialog {
  position: absolute;
  left: 856px;
  top: 173px;
  width: 291px;
  padding: 0 7px 7px;
  border: 1px solid #2f4a60;
  border-radius: 6px 6px 0 0;
  background: linear-gradient(#9db9da, #b3cbe6 30px, #d3e2f2 110px, #b5cee8 115px, #b9d1ea);
  font-family: 'Liberation Sans', Arial, sans-serif;
  font-size: 10px;
  color: #222;
  white-space: nowrap;
}
.dialog-title {
  height: 27px;
  padding: 5px 1px 0 4px;
  display: flex;
  align-items: center;
  justify-content: space-between;
  font-family: 'Open Sans', 'Noto Sans', sans-serif;
  font-size: 11px;
}
.close {
  width: 30px;
  height: 16px;
  border: 1px solid #6f3232;
  border-radius: 3px;
  background: linear-gradient(#e0a090, #cc5040 50%, #b83020 51%, #d06050);
}
.close svg {
  width: 14px;
  height: 11px;
}
.dialog-body {
  height: 333px;
  padding: 23px 9px 11px 10px;
  background: #eee;
  display: flex;
  flex-direction: column;
}
.space-row, .row {
  display: flex;
  align-items: center;
}
.space-row input {
  width: 42px;
  margin: 0 6px 0 auto;
}
.space-row span {
  width: 56px;
}
.dialog input[type="text"] {
  height: 22px;
  padding: 0 3px;
  border: 1px solid #ddd;
  border-top-color: #999;
  background: #fff;
}
fieldset {
  margin: 20px 0 0;
  padding: 9px 17px;
  height: 99px;
  min-width: 0;
  border: 1px solid #dcdcdc;
  border-radius: 3px;
}
fieldset .row {
  height: 26px;
}
.jumps {
  margin-top: 23px;
}
.dialog input[type="checkbox"], .dialog input[type="radio"] {
  appearance: none;
  flex: none;
  width: 12px;
  height: 12px;
  margin: 0 3px 0 0;
  border: 1px solid #8a8a8a;
  background: linear-gradient(135deg, #cfcfcf, #fafafa);
  box-shadow: inset 0 0 0 1px #f4f4f4;
}
.dialog input[type="radio"] {
  border-radius: 50%;
}
.dialog input[type="radio"]:checked {
  background: radial-gradient(#2a86b0 0 3px, #e8f2fa 4px);
  border-color: #567;
}
.dialog input[type="checkbox"]:checked::after {
  content: '';
  display: block;
  width: 4px;
  height: 7px;
  margin: 0 3px;
  border: solid #3c50a0;
  border-width: 0 2px 2px 0;
  transform: rotate(40deg);
}
.symbol-label {
  width: 75px;
}
.symbol {
  flex: none;
  width: 18px;
  height: 22px;
}
.row .measure {
  width: 42px;
  margin-left: auto;
  margin-right: 17px;
}
.jumps .measure {
  margin-right: 1px;
}
.dialog input:disabled {
  border-color: #bbb;
  background: #eee;
}
.first {
  width: 98px;
}
.off {
  margin-left: 8px;
  color: #b5b5b5;
}
.actions {
  margin-top: auto;
  display: flex;
  gap: 16px;
  padding-left: 50px;
}
.actions button {
  width: 69px;
  height: 20px;
  border: 1px solid #888;
  border-radius: 3px;
  background: linear-gradient(#f2f2f2 50%, #d8d8d8 51%);
}
.actions .ok {
  border-color: #2c7fb0;
  background: linear-gradient(#eaf5fc 50%, #cfe8f6 51%);
  box-shadow: inset 0 0 0 1px #58c8f0;
}

/* Highlighted mouse pointer */
.pointer {
  position: absolute;
  left: 999px;
  top: 452px;
  width: 36px;
  height: 44px;
  pointer-events: none;
}
```
